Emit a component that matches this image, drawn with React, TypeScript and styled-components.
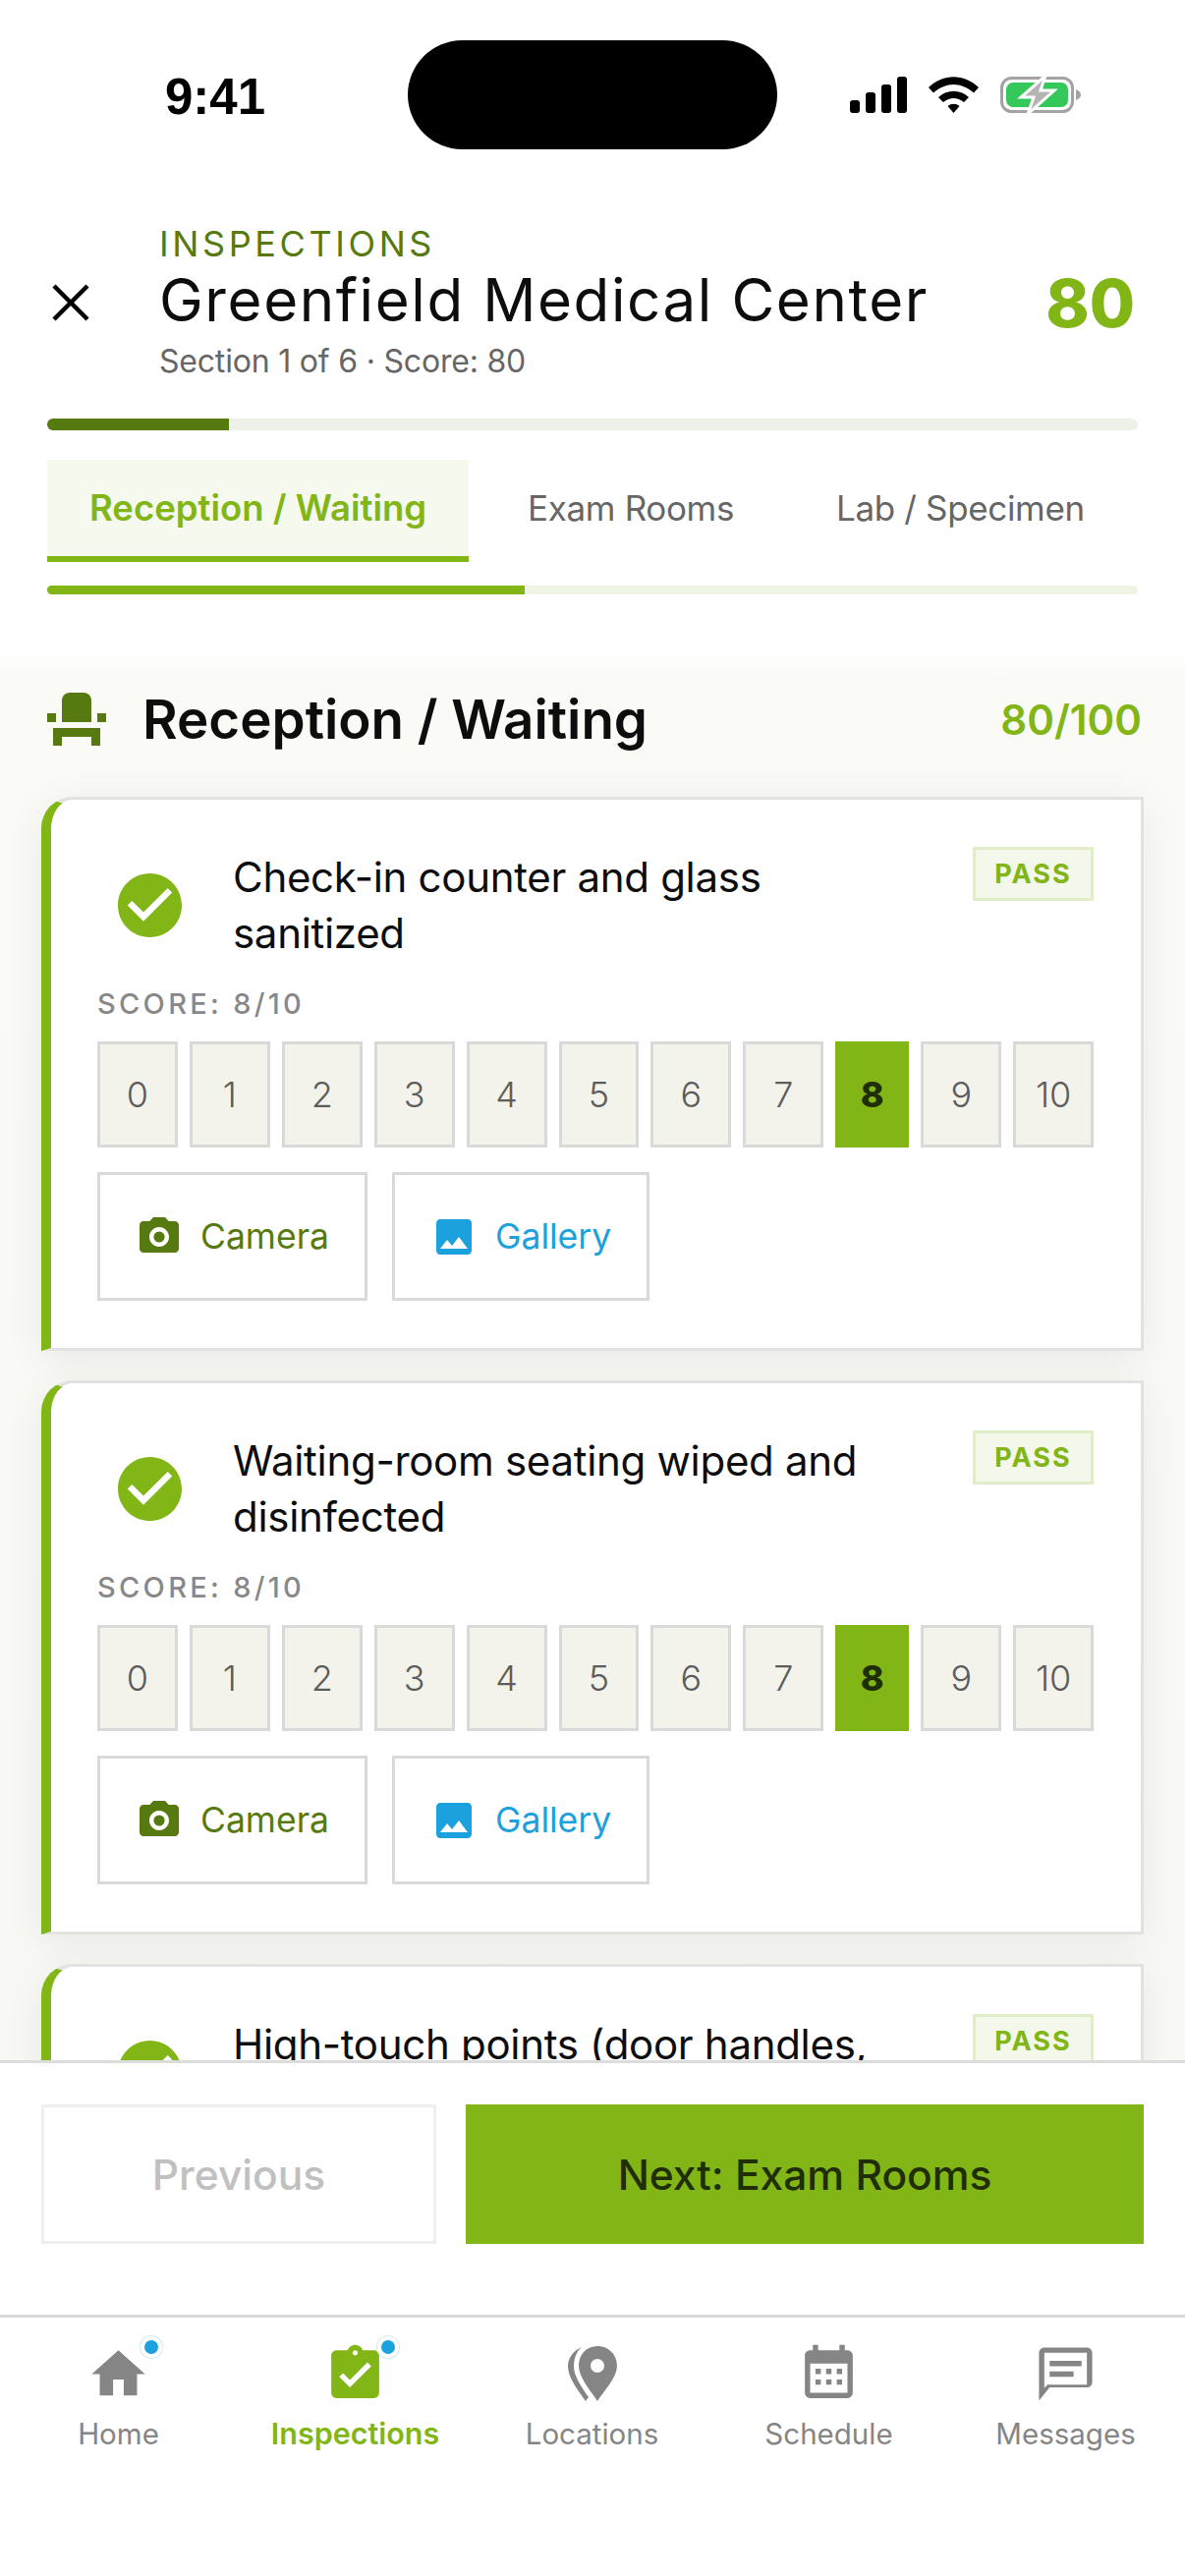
import React from "react";
import styled, { createGlobalStyle } from "styled-components";

const GREEN = "#82b516";
const DARK_GREEN = "#567a0f";
const BLUE = "#1ba1de";
const GREY_ICON = "#858585";

const GlobalStyle = createGlobalStyle`
  html, body {
    margin: 0;
    padding: 0;
    background: #fff;
  }
  * {
    box-sizing: border-box;
  }
`;

const checks = [
  "Check-in counter and glass sanitized",
  "Waiting-room seating wiped and disinfected",
  "High-touch points (door handles, counters) cleaned",
];

const scores = [0, 1, 2, 3, 4, 5, 6, 7, 8, 9, 10];

const HomeIcon = () => (
  <svg width="65" height="65" viewBox="0 0 24 24" fill={GREY_ICON}>
    <path d="M10 20v-6h4v6h5v-8h3L12 3 2 12h3v8z" />
  </svg>
);

const ClipboardIcon = () => (
  <svg width="65" height="65" viewBox="0 0 24 24" fill={GREEN}>
    <path d="M19 3h-4.18C14.4 1.84 13.3 1 12 1c-1.3 0-2.4.84-2.82 2H5c-1.1 0-2 .9-2 2v14c0 1.1.9 2 2 2h14c1.1 0 2-.9 2-2V5c0-1.1-.9-2-2-2zm-7 0c.55 0 1 .45 1 1s-.45 1-1 1-1-.45-1-1 .45-1 1-1zm-2 14l-4-4 1.41-1.41L10 14.17l6.59-6.59L18 9l-8 8z" />
  </svg>
);

const PinIcon = () => (
  <svg width="65" height="65" viewBox="0 0 65 65" fill={GREY_ICON}>
    <path
      fillRule="evenodd"
      d="M38 4C49 4 58 12.500 58 24C58 36 45 49 38 60C31 49 19 36 19 24C19 12.500 27 4 38 4ZM38 17a7 7 0 1 0 0 14a7 7 0 1 0 0-14Z"
    />
    <path d="M22 5C13 9 8 16 8 25C8 36 19 50 26 60L29 56C22 46 14 34 14 25C14 16 17 9 22 5Z" />
  </svg>
);

const CalendarIcon = () => (
  <svg width="65" height="65" viewBox="0 0 24 24" fill={GREY_ICON}>
    <path
      fillRule="evenodd"
      d="M19 3h-1V1h-2v2H8V1H6v2H5c-1.110 0-2 .9-2 2v14c0 1.100.9 2 2 2h14c1.100 0 2-.9 2-2V5c0-1.100-.9-2-2-2zm0 16H5V8h14v11z"
    />
    <path d="M7 10h2v2H7zM11 10h2v2h-2zM15 10h2v2h-2zM7 14h2v2H7zM11 14h2v2h-2zM15 14h2v2h-2z" />
  </svg>
);

const MessageIcon = () => (
  <svg width="65" height="65" viewBox="0 0 24 24" fill={GREY_ICON}>
    <path d="M20 2H4c-1.100 0-2 .9-2 2v18l4-5h14c1.100 0 2-.9 2-2V4c0-1.100-.9-2-2-2zm0 14H5.170L4 17.170V4h16v12z" />
    <path d="M6 7h12v2H6zM6 11h9v2H6z" />
  </svg>
);

const navItems = [
  { label: "Home", icon: <HomeIcon />, active: false, dot: true },
  { label: "Inspections", icon: <ClipboardIcon />, active: true, dot: true },
  { label: "Locations", icon: <PinIcon />, active: false, dot: false },
  { label: "Schedule", icon: <CalendarIcon />, active: false, dot: false },
  { label: "Messages", icon: <MessageIcon />, active: false, dot: false },
];

const App: React.FC = () => {
  return (
    <Screen>
      <GlobalStyle />
      <StatusBar>
        <Time>9:41</Time>
        <Island />
        <StatusIcons>
          <svg width="58" height="37" viewBox="0 0 58 37" fill="#000">
            <rect x="0" y="24" width="10" height="13" rx="3" />
            <rect x="16" y="16" width="10" height="21" rx="3" />
            <rect x="32" y="8" width="10" height="29" rx="3" />
            <rect x="48" y="0" width="10" height="37" rx="3" />
          </svg>
          <svg width="51" height="37" viewBox="0 0 51 37" fill="#000">
            <path d="M0 11C15-3.500 36-3.500 51 11L46 16.500C33 5 18 5 5 16.500Z" />
            <path d="M10 21C19 12.500 32 12.500 41 21L36 26C29 20.500 22 20.500 15 26Z" />
            <path d="M19.500 30C23 27 28 27 31.500 30L25.500 37Z" />
          </svg>
          <svg width="82" height="39" viewBox="0 0 82 39">
            <rect x="1.500" y="2.500" width="72" height="34" rx="10" fill="#fff" stroke="#a3a3a3" strokeWidth="3" />
            <rect x="6" y="7" width="63" height="25" rx="7" fill="#34c759" />
            <path d="M77 14c3 1 5 3 5 5.500s-2 4.500-5 5.500z" fill="#a3a3a3" />
            <path d="M46 0L21 22h13l-6 17 27-24H41z" fill="#b4b4b4" stroke="#fff" strokeWidth="3" />
          </svg>
        </StatusIcons>
      </StatusBar>

      <Header>
        <CloseIcon width="38" height="38" viewBox="0 0 38 38">
          <path d="M2 2L36 36M36 2L2 36" stroke="#000" strokeWidth="4.500" fill="none" />
        </CloseIcon>
        <HeaderText>
          <Eyebrow>INSPECTIONS</Eyebrow>
          <Title>Greenfield Medical Center</Title>
          <Subtitle>Section 1 of 6 · Score: 80</Subtitle>
        </HeaderText>
        <BigScore>80</BigScore>
      </Header>

      <Progress $height={12} $track="#eef1e8" $fill={DARK_GREEN} $width={185} />

      <Tabs>
        <Tab $active>Reception / Waiting</Tab>
        <Tab>Exam Rooms</Tab>
        <Tab>Lab / Specimen</Tab>
      </Tabs>

      <SubProgress $height={9} $track="#eff5e4" $fill={GREEN} $width={486} />

      <Main>
        <SectionHead>
          <svg width="60" height="54" viewBox="0 0 60 54" fill={DARK_GREEN}>
            <path d="M15 8a8 8 0 0 1 8-8h14a8 8 0 0 1 8 8v22H15z" />
            <rect x="0" y="21" width="9" height="9" />
            <rect x="51" y="21" width="9" height="9" />
            <path d="M6 36h48v18H45v-9H15v9H6z" />
          </svg>
          <SectionTitle>Reception / Waiting</SectionTitle>
          <SectionScore>80/100</SectionScore>
        </SectionHead>

        <CardList>
          {checks.map((text) => (
            <Card key={text}>
              <CardTop>
                <CheckIcon width="65" height="65" viewBox="2 2 20 20" fill={GREEN}>
                  <path d="M12 2C6.480 2 2 6.480 2 12s4.480 10 10 10 10-4.480 10-10S17.520 2 12 2zm-2 15l-5-5 1.410-1.410L10 14.170l7.590-7.590L19 8l-9 9z" />
                </CheckIcon>
                <CheckText>{text}</CheckText>
                <PassBadge>PASS</PassBadge>
              </CardTop>
              <ScoreLabel>SCORE: 8/10</ScoreLabel>
              <ScoreRow>
                {scores.map((n) => (
                  <ScoreBox key={n} $selected={n === 8}>
                    {n}
                  </ScoreBox>
                ))}
              </ScoreRow>
              <MediaRow>
                <MediaButton $color={DARK_GREEN}>
                  <svg width="48" height="48" viewBox="0 0 24 24" fill={DARK_GREEN}>
                    <circle cx="12" cy="12" r="2.800" />
                    <path d="M9 2L7.170 4H4c-1.100 0-2 .9-2 2v12c0 1.100.9 2 2 2h16c1.100 0 2-.9 2-2V6c0-1.100-.9-2-2-2h-3.170L15 2H9zm3 15c-2.760 0-5-2.240-5-5s2.240-5 5-5 5 2.240 5 5-2.240 5-5 5z" />
                  </svg>
                  Camera
                </MediaButton>
                <MediaButton $color={BLUE}>
                  <svg width="48" height="48" viewBox="0 0 24 24" fill={BLUE}>
                    <path d="M21 19V5c0-1.100-.9-2-2-2H5c-1.100 0-2 .9-2 2v14c0 1.100.9 2 2 2h14c1.100 0 2-.9 2-2zM8.500 13.500l2.500 3.010L14.500 12l4.500 6H5l3.500-4.500z" />
                  </svg>
                  Gallery
                </MediaButton>
              </MediaRow>
            </Card>
          ))}
        </CardList>
      </Main>

      <Footer>
        <PrevButton>Previous</PrevButton>
        <NextButton>Next: Exam Rooms</NextButton>
      </Footer>

      <Nav>
        {navItems.map((item) => (
          <NavItem key={item.label} $active={item.active}>
            <NavIconWrap>
              {item.icon}
              {item.dot && <NavDot />}
            </NavIconWrap>
            {item.label}
          </NavItem>
        ))}
      </Nav>
    </Screen>
  );
};

export default App;

const Screen = styled.div`
  width: 1206px;
  height: 2622px;
  display: flex;
  flex-direction: column;
  overflow: hidden;
  background: #fff;
  font-family: Inter, "Liberation Sans", sans-serif;
`;

const StatusBar = styled.div`
  display: grid;
  grid-template-columns: 415px 376px 1fr;
  align-items: center;
  padding-top: 41px;
  height: 152px;
  flex: none;
`;

const Time = styled.div`
  padding-left: 168px;
  font-family: "Liberation Sans", sans-serif;
  font-size: 51px;
  font-weight: 700;
  color: #000;
  line-height: 1;
  margin-top: 4px;
`;

const Island = styled.div`
  height: 111px;
  background: #000;
  border-radius: 56px;
`;

const StatusIcons = styled.div`
  display: flex;
  align-items: center;
  gap: 22px;
  padding-left: 74px;
`;

const Header = styled.div`
  display: flex;
  align-items: center;
  padding: 74px 51px 0 53px;
  flex: none;
`;

const CloseIcon = styled.svg`
  flex: none;
  margin-right: 71px;
`;

const HeaderText = styled.div`
  flex: 1;
  min-width: 0;
`;

const Eyebrow = styled.div`
  font-size: 36px;
  line-height: 44px;
  letter-spacing: 3.6px;
  color: ${DARK_GREEN};
`;

const Title = styled.div`
  font-size: 60px;
  line-height: 72px;
  margin-top: -1px;
  color: #0d0d0d;
  letter-spacing: 1.6px;
`;

const Subtitle = styled.div`
  font-size: 32px;
  line-height: 44px;
  margin-top: 5px;
  letter-spacing: -0.2px;
  color: #666;
`;

const BigScore = styled.div`
  font-size: 67px;
  font-weight: 800;
  color: ${GREEN};
  line-height: 1;
`;

const Progress = styled.div<{ $height: number; $track: string; $fill: string; $width: number }>`
  flex: none;
  margin: 36px 48px 0;
  height: ${(p) => p.$height}px;
  border-radius: 6px;
  background: linear-gradient(
    to right,
    ${(p) => p.$fill} ${(p) => p.$width}px,
    ${(p) => p.$track} ${(p) => p.$width}px
  );
`;

const SubProgress = styled(Progress)`
  margin-top: 24px;
`;

const Tabs = styled.div`
  display: flex;
  flex: none;
  height: 104px;
  margin: 30px 48px 0;
`;

const Tab = styled.div<{ $active?: boolean }>`
  display: flex;
  align-items: center;
  height: 100%;
  white-space: nowrap;
  font-size: ${(p) => (p.$active ? "36.5px" : "35px")};
  letter-spacing: ${(p) => (p.$active ? "0" : "-0.35px")};
  padding: ${(p) => (p.$active ? "0 43px" : "0 52px 6px")};
  margin-right: ${(p) => (p.$active ? "8px" : "0")};
  font-weight: ${(p) => (p.$active ? 600 : 400)};
  color: ${(p) => (p.$active ? GREEN : "#666")};
  background: ${(p) => (p.$active ? "#f5f9ee" : "transparent")};
  border-bottom: ${(p) => (p.$active ? `6px solid ${GREEN}` : "none")};
`;

const Main = styled.div`
  flex: 1;
  min-height: 0;
  overflow: hidden;
  margin-top: 60px;
  padding: 37px 42px 0;
  background: linear-gradient(to bottom, #fefefd 0, #fafaf7 30px, #f8f8f4 100%);
`;

const SectionHead = styled.div`
  display: flex;
  align-items: center;
  padding: 0 2px 0 6px;
  height: 60px;
`;

const SectionTitle = styled.div`
  flex: 1;
  margin-left: 37px;
  font-size: 54.700px;
  font-weight: 600;
  color: #0d0d0d;
`;

const SectionScore = styled.div`
  font-size: 42px;
  font-weight: 600;
  color: ${GREEN};
`;

const CardList = styled.div`
  display: flex;
  flex-direction: column;
  gap: 30px;
  margin-top: 49px;
`;

const Card = styled.div`
  flex: none;
  background: #fff;
  border: 3px solid #e2e2e2;
  border-left: 10px solid ${GREEN};
  border-top-left-radius: 32px;
  padding: 48px 48px 48px 47px;
  box-shadow: 0 8px 40px rgba(0, 0, 0, 0.07);
`;

const CardTop = styled.div`
  display: flex;
  align-items: flex-start;
`;

const CheckIcon = styled.svg`
  flex: none;
  margin: 27px 52px 0 21px;
`;

const CheckText = styled.div`
  flex: 1;
  font-size: 42px;
  line-height: 57px;
  letter-spacing: -0.3px;
  color: #0d0d0d;
  padding: 2px 60px 0 0;
`;

const PassBadge = styled.div`
  flex: none;
  width: 123px;
  height: 55px;
  display: flex;
  align-items: center;
  justify-content: center;
  background: #f3f8ea;
  border: 3px solid #e0edc8;
  color: ${GREEN};
  font-size: 27px;
  font-weight: 700;
  letter-spacing: 2px;
`;

const ScoreLabel = styled.div`
  margin-top: 26px;
  font-size: 29px;
  line-height: 36px;
  letter-spacing: 3.3px;
  font-weight: 500;
  color: #888;
`;

const ScoreRow = styled.div`
  display: flex;
  gap: 12px;
  margin-top: 20px;
`;

const ScoreBox = styled.div<{ $selected: boolean }>`
  flex: ${(p) => (p.$selected ? "0 0 75px" : "1")};
  height: 108px;
  display: flex;
  align-items: center;
  justify-content: center;
  font-size: 36px;
  font-weight: ${(p) => (p.$selected ? 800 : 300)};
  color: ${(p) => (p.$selected ? "#1f2e05" : "#5c5c5c")};
  background: ${(p) => (p.$selected ? GREEN : "#f3f3eb")};
  border: ${(p) => (p.$selected ? "none" : "3px solid #d9d9d9")};
`;

const MediaRow = styled.div`
  display: flex;
  gap: 25px;
  margin-top: 25px;
`;

const MediaButton = styled.div<{ $color: string }>`
  height: 131px;
  display: flex;
  align-items: center;
  gap: 18px;
  padding: 0 36px;
  border: 3px solid #d9d9d9;
  background: #fff;
  font-size: 35.5px;
  color: ${(p) => p.$color};
`;

const Footer = styled.div`
  flex: none;
  display: flex;
  gap: 30px;
  height: 259px;
  padding: 42px 42px 72px;
  background: #fff;
  border-top: 3px solid #dcdcdc;
`;

const PrevButton = styled.div`
  flex: 0 0 402px;
  display: flex;
  align-items: center;
  justify-content: center;
  border: 3px solid #eee;
  font-size: 42.5px;
  font-weight: 500;
  color: #c0c0c0;
`;

const NextButton = styled.div`
  flex: 1;
  display: flex;
  align-items: center;
  justify-content: center;
  background: ${GREEN};
  font-size: 42.5px;
  font-weight: 500;
  color: #1f2e05;
`;

const Nav = styled.div`
  flex: none;
  height: 266px;
  display: grid;
  grid-template-columns: repeat(5, 241px);
  padding-top: 25px;
  border-top: 3px solid #d9d9d9;
`;

const NavItem = styled.div<{ $active: boolean }>`
  display: flex;
  flex-direction: column;
  align-items: center;
  font-size: ${(p) => (p.$active ? "30.5px" : "29.5px")};
  line-height: 44px;
  font-weight: ${(p) => (p.$active ? 600 : 400)};
  color: ${(p) => (p.$active ? GREEN : "#858585")};
`;

const NavIconWrap = styled.div`
  position: relative;
  width: 65px;
  height: 65px;
  margin-bottom: 6px;
`;

const NavDot = styled.span`
  position: absolute;
  top: -2px;
  right: -8px;
  width: 14px;
  height: 14px;
  border-radius: 50%;
  background: ${BLUE};
  box-shadow: 0 0 0 4px #fff, 0 0 0 5px #cfeaf7;
`;
